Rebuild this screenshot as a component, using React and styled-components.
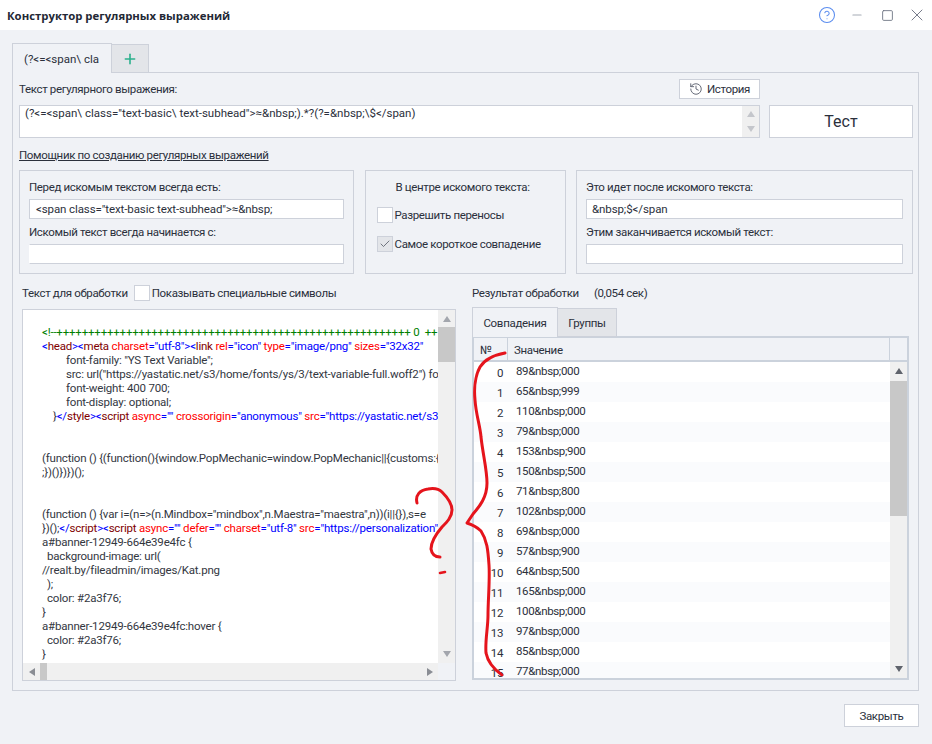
import React from "react";
import styled, { createGlobalStyle } from "styled-components";
import { CircleHelp, Minus, Square, X, Plus, History, Check } from "lucide-react";

const GlobalStyle = createGlobalStyle`
  html, body {
    margin: 0;
    padding: 0;
    background: #f0f2f6;
  }
  body {
    font-family: Roboto, "Liberation Sans", sans-serif;
    font-size: 11.5px;
    letter-spacing: -0.35px;
    color: #2b303c;
  }
  * {
    box-sizing: border-box;
  }
`;

const Page = styled.div`
  position: relative;
  width: 932px;
  height: 744px;
  overflow: hidden;
`;

const TitleBar = styled.div`
  height: 30px;
  background: #fff;
  display: flex;
  align-items: center;
  padding-left: 7px;
`;

const Title = styled.div`
  flex: 1;
  font-family: "Open Sans", sans-serif;
  font-weight: 700;
  font-size: 11.35px;
  letter-spacing: 0;
  color: #232835;
`;

const WindowButton = styled.div`
  width: 30px;
  height: 30px;
  display: flex;
  align-items: center;
  justify-content: center;
  color: ${(p) => p.$color || "#6a7080"};
`;

const Body = styled.div`
  padding: 13px 13px 0 12px;
`;

const TabRow = styled.div`
  display: flex;
  align-items: flex-end;
  position: relative;
  z-index: 1;
  margin-bottom: -1px;
`;

const Tab = styled.div`
  height: ${(p) => (p.$active ? 30 : 29)}px;
  width: ${(p) => p.$width}px;
  display: flex;
  align-items: center;
  justify-content: ${(p) => (p.$center ? "center" : "flex-start")};
  padding-left: ${(p) => (p.$center ? 0 : p.$pad || 0)}px;
  border: 1px solid #cdd1da;
  border-bottom: ${(p) => (p.$active ? "none" : "1px solid #cdd1da")};
  margin-left: ${(p) => (p.$active ? 0 : -1)}px;
  background: ${(p) => (p.$active ? "#f0f2f6" : "#e3e5e9")};
  color: #2b303c;
  letter-spacing: ${(p) => (p.$center ? "-0.3px" : "0")};
`;

const Panel = styled.div`
  height: 619px;
  border: 1px solid #cdd1da;
  padding: 6px 5px 0 6px;
`;

const TopGrid = styled.div`
  display: grid;
  grid-template-columns: 741px 144px;
  grid-template-rows: 20px 33px;
  column-gap: 9px;
  row-gap: 6px;
  align-items: center;
`;

const LabelRow = styled.div`
  display: flex;
  justify-content: space-between;
  align-items: center;
  grid-column: 1;
`;

const HistoryButton = styled.div`
  width: 81px;
  height: 20px;
  background: #fff;
  border: 1px solid #cdd1da;
  display: flex;
  align-items: center;
  justify-content: center;
  gap: 4px;
  color: #2b303c;
`;

const RegexBox = styled.div`
  grid-column: 1;
  height: 33px;
  background: #fff;
  border: 1px solid #cdd1da;
  display: flex;
  justify-content: space-between;
`;

const RegexText = styled.div`
  padding: 0 0 0 5px;
  line-height: 15px;
  letter-spacing: 0;
`;

const RegexScroll = styled.div`
  width: 17px;
  background: #f0f0f0;
  display: flex;
  flex-direction: column;
  align-items: center;
  justify-content: space-around;
`;

const Arrow = styled.span`
  width: 0;
  height: 0;
  display: block;
  border-style: solid;
  ${(p) => {
    const c = p.$color || "#6b6f78";
    if (p.$dir === "up") return `border-width: 0 4px 6px 4px; border-color: transparent transparent ${c} transparent;`;
    if (p.$dir === "down") return `border-width: 6px 4px 0 4px; border-color: ${c} transparent transparent transparent;`;
    if (p.$dir === "left") return `border-width: 4px 6px 4px 0; border-color: transparent ${c} transparent transparent;`;
    return `border-width: 4px 0 4px 6px; border-color: transparent transparent transparent ${c};`;
  }}
`;

const TestButton = styled.div`
  height: 33px;
  background: #fff;
  border: 1px solid #cdd1da;
  display: flex;
  align-items: center;
  justify-content: center;
  font-size: 16px;
  letter-spacing: 0;
  color: #2b303c;
`;

const HelperLink = styled.a`
  display: block;
  margin-top: 10px;
  height: 15px;
  line-height: 15px;
  color: #2b303c;
  text-decoration: underline;
`;

const Groups = styled.div`
  display: grid;
  grid-template-columns: 335px 201px 337px;
  column-gap: 10.5px;
  margin-top: 7px;
`;

const Group = styled.div`
  height: 104px;
  border: 1px solid #cdd1da;
  padding: 9px 9px 0 9px;
`;

const GroupLabel = styled.div`
  height: 15px;
  line-height: 15px;
  margin-bottom: ${(p) => p.$gap || 4}px;
`;

const Field = styled.div`
  height: 20px;
  line-height: 18px;
  background: #fff;
  border: 1px solid #cdd1da;
  border-left-color: ${(p) => (p.$bare ? "#fff" : "#cdd1da")};
  padding-left: ${(p) => p.$pad}px;
  margin-bottom: 6px;
  overflow: hidden;
  letter-spacing: -0.1px;
`;

const CheckRow = styled.div`
  display: flex;
  align-items: center;
  gap: 2px;
  height: 16px;
  margin: ${(p) => p.$margin || 0};
`;

const Box = styled.div`
  width: 16px;
  height: 16px;
  background: ${(p) => (p.$checked ? "#e3e5e9" : "#fff")};
  border: 1px solid #cdd1da;
  display: flex;
  align-items: center;
  justify-content: center;
  color: #4b505c;
`;

const MiddleHead = styled.div`
  height: 15px;
  line-height: 15px;
  padding-left: 21px;
`;

const Columns = styled.div`
  display: grid;
  grid-template-columns: 434px 438px;
  column-gap: 16px;
  margin-top: 11px;
  padding-left: 3px;
`;

const Column = styled.div`
  min-width: 0;
`;

const SectionHead = styled.div`
  height: 16px;
  display: flex;
  align-items: center;
  gap: ${(p) => p.$gap || 6}px;
  margin-bottom: 8px;
`;

const CodeBox = styled.div`
  height: 372px;
  border: 1px solid #cdd1da;
  background: #f0f2f6;
  display: grid;
  grid-template-columns: 415px 17px;
  grid-template-rows: 353px 17px;
`;

const CodeArea = styled.div`
  background: #fff;
  overflow: hidden;
  padding: 15px 0 0 19px;
  letter-spacing: -0.2px;
`;

const CodeLine = styled.div`
  height: 14px;
  line-height: 14px;
  white-space: pre;
  padding-left: ${(p) => p.$indent || 0}px;
  color: #33373f;
`;

const Token = styled.span`
  color: ${(p) => p.$c};
`;

const VScroll = styled.div`
  background: #f0f0f0;
  display: flex;
  flex-direction: column;
  align-items: center;
  justify-content: space-between;
  padding: ${(p) => p.$pad || "6px 0"};
  position: relative;
`;

const VThumb = styled.div`
  position: absolute;
  left: 0;
  right: 0;
  top: ${(p) => p.$top}px;
  height: ${(p) => p.$height}px;
  background: #c8c8c8;
`;

const HScroll = styled.div`
  background: #f0f0f0;
  display: flex;
  align-items: center;
  justify-content: space-between;
  padding: 0 5px 0 6px;
  position: relative;
`;

const HThumb = styled.div`
  position: absolute;
  left: 17px;
  top: 0;
  bottom: 0;
  width: 7px;
  background: #c8c8c8;
`;

const ResultTabs = styled.div`
  display: flex;
  align-items: flex-end;
  height: 28px;
  margin-bottom: -1px;
  position: relative;
  z-index: 1;
`;

const Table = styled.div`
  height: 344px;
  width: 437px;
  border: 2px solid #cbd2dc;
  display: grid;
  grid-template-columns: 1fr 17px;
  grid-template-rows: 24px 1fr;
`;

const HeadRow = styled.div`
  display: grid;
  grid-template-columns: 34px 1fr;
  border-bottom: 2px solid #cbd2dc;
`;

const HeadCell = styled.div`
  display: flex;
  align-items: center;
  padding: 2px 0 0 6px;
  border-right: 1px solid #cbd2dc;
`;

const HeadCorner = styled.div`
  border-bottom: 2px solid #cbd2dc;
`;

const Rows = styled.div`
  overflow: hidden;
  background: #fff;
`;

const Row = styled.div`
  height: 20px;
  display: grid;
  grid-template-columns: 29px 1fr;
  column-gap: 13px;
  background: ${(p) => (p.$alt ? "#fafbfd" : "#fff")};
`;

const NumCell = styled.div`
  text-align: right;
  line-height: 22px;
`;

const ValueCell = styled.div`
  line-height: 18px;
`;

const Footer = styled.div`
  display: flex;
  justify-content: flex-end;
  margin-top: 13px;
`;

const CloseButton = styled.div`
  width: 75px;
  height: 23px;
  background: #fff;
  border: 1px solid #cdd1da;
  display: flex;
  align-items: center;
  justify-content: center;
`;

const Scribble = styled.svg`
  position: absolute;
  left: 0;
  top: 0;
  pointer-events: none;
`;

const RED = "#e5141c";
const BLUE = "#0000ff";
const MAROON = "#800000";
const ATTR = "#ff0000";
const GREEN = "#008000";

const T = ({ c, children }) => <Token $c={c}>{children}</Token>;

const attr = (name, value) => (
  <>
    {" "}
    <T c={ATTR}>{name}</T>
    <T c={BLUE}>="{value}"</T>
  </>
);

const matches = [
  "89&nbsp;000",
  "65&nbsp;999",
  "110&nbsp;000",
  "79&nbsp;000",
  "153&nbsp;900",
  "150&nbsp;500",
  "71&nbsp;800",
  "102&nbsp;000",
  "69&nbsp;000",
  "57&nbsp;900",
  "64&nbsp;500",
  "165&nbsp;000",
  "100&nbsp;000",
  "97&nbsp;000",
  "85&nbsp;000",
  "77&nbsp;000",
];

const App = () => {
  return (
    <Page>
      <GlobalStyle />
      <TitleBar>
        <Title>Конструктор регулярных выражений</Title>
        <WindowButton $color="#5b8def">
          <CircleHelp size={18} strokeWidth={1.4} />
        </WindowButton>
        <WindowButton $color="#a6abb6">
          <Minus size={14} strokeWidth={2} />
        </WindowButton>
        <WindowButton>
          <Square size={13} strokeWidth={1.6} />
        </WindowButton>
        <WindowButton>
          <X size={20} strokeWidth={1.1} />
        </WindowButton>
      </TitleBar>

      <Body>
        <TabRow>
          <Tab $active $width={100} $pad={11}>
            {"(?<=<span\\ cla"}
          </Tab>
          <Tab $width={38} $center>
            <Plus size={16} strokeWidth={2.4} color="#2bb08c" />
          </Tab>
        </TabRow>

        <Panel>
          <TopGrid>
            <LabelRow>
              Текст регулярного выражения:
              <HistoryButton>
                <History size={14} strokeWidth={1.6} color="#5c6270" />
                История
              </HistoryButton>
            </LabelRow>
            <div />
            <RegexBox>
              <RegexText>
                {'(?<=<span\\ class="text-basic\\ text-subhead">≈&nbsp;).*?(?=&nbsp;\\$</span)'}
              </RegexText>
              <RegexScroll>
                <Arrow $dir="up" $color="#c4c6cb" />
                <Arrow $dir="down" $color="#c4c6cb" />
              </RegexScroll>
            </RegexBox>
            <TestButton>Тест</TestButton>
          </TopGrid>

          <HelperLink>Помощник по созданию регулярных выражений</HelperLink>

          <Groups>
            <Group>
              <GroupLabel>Перед искомым текстом всегда есть:</GroupLabel>
              <Field $pad={6}>{'<span class="text-basic text-subhead">≈&nbsp;'}</Field>
              <GroupLabel>Искомый текст всегда начинается с:</GroupLabel>
              <Field $pad={0} $bare />
            </Group>
            <Group>
              <MiddleHead>В центре искомого текста:</MiddleHead>
              <CheckRow $margin="12px 0 0 2px">
                <Box />
                Разрешить переносы
              </CheckRow>
              <CheckRow $margin="13px 0 0 2px">
                <Box $checked>
                  <Check size={12} strokeWidth={1.5} />
                </Box>
                Самое короткое совпадение
              </CheckRow>
            </Group>
            <Group>
              <GroupLabel>Это идет после искомого текста:</GroupLabel>
              <Field $pad={5}>{"&nbsp;$</span"}</Field>
              <GroupLabel>Этим заканчивается искомый текст:</GroupLabel>
              <Field $pad={0} />
            </Group>
          </Groups>

          <Columns>
            <Column>
              <SectionHead>
                Текст для обработки
                <CheckRow>
                  <Box />
                  Показывать специальные символы
                </CheckRow>
              </SectionHead>
              <CodeBox>
                <CodeArea>
                  <CodeLine>
                    <T c={GREEN}>{"<!--" + "+".repeat(56) + " 0  ++"}</T>
                  </CodeLine>
                  <CodeLine>
                    <T c={BLUE}>{"<"}</T>
                    <T c={MAROON}>head</T>
                    <T c={BLUE}>{"><"}</T>
                    <T c={MAROON}>meta</T>
                    {attr("charset", "utf-8")}
                    <T c={BLUE}>{"><"}</T>
                    <T c={MAROON}>link</T>
                    {attr("rel", "icon")}
                    {attr("type", "image/png")}
                    {attr("sizes", "32x32")}
                  </CodeLine>
                  <CodeLine $indent={24}>font-family: "YS Text Variable";</CodeLine>
                  <CodeLine $indent={24}>
                    src: url("https://yastatic.net/s3/home/fonts/ys/3/text-variable-full.woff2") format("woff2");
                  </CodeLine>
                  <CodeLine $indent={24}>font-weight: 400 700;</CodeLine>
                  <CodeLine $indent={24}>font-display: optional;</CodeLine>
                  <CodeLine $indent={11}>
                    {"}"}
                    <T c={BLUE}>{"</"}</T>
                    <T c={MAROON}>style</T>
                    <T c={BLUE}>{"><"}</T>
                    <T c={MAROON}>script</T>
                    {attr("async", "")}
                    {attr("crossorigin", "anonymous")}
                    {attr("src", "https://yastatic.net/s3/")}
                  </CodeLine>
                  <CodeLine />
                  <CodeLine />
                  <CodeLine>
                    {"(function () {(function(){window.PopMechanic=window.PopMechanic||{customs:{}"}
                  </CodeLine>
                  <CodeLine>{";})()})})();"}</CodeLine>
                  <CodeLine />
                  <CodeLine />
                  <CodeLine>
                    {'(function () {var i=(n=>(n.Mindbox="mindbox",n.Maestra="maestra",n))(i||{}),s=e'}
                  </CodeLine>
                  <CodeLine>
                    {"})();"}
                    <T c={BLUE}>{"</"}</T>
                    <T c={MAROON}>script</T>
                    <T c={BLUE}>{"><"}</T>
                    <T c={MAROON}>script</T>
                    {attr("async", "")}
                    {attr("defer", "")}
                    {attr("charset", "utf-8")}
                    {attr("src", "https://personalization")}
                  </CodeLine>
                  <CodeLine>{"a#banner-12949-664e39e4fc {"}</CodeLine>
                  <CodeLine $indent={5}>background-image: url(</CodeLine>
                  <CodeLine>//realt.by/fileadmin/images/Kat.png</CodeLine>
                  <CodeLine $indent={5}>);</CodeLine>
                  <CodeLine $indent={5}>color: #2a3f76;</CodeLine>
                  <CodeLine>{"}"}</CodeLine>
                  <CodeLine>{"a#banner-12949-664e39e4fc:hover {"}</CodeLine>
                  <CodeLine $indent={5}>color: #2a3f76;</CodeLine>
                  <CodeLine>{"}"}</CodeLine>
                </CodeArea>
                <VScroll>
                  <Arrow $dir="up" $color="#a3a6ad" />
                  <VThumb $top={17} $height={35} />
                  <Arrow $dir="down" $color="#a3a6ad" />
                </VScroll>
                <HScroll>
                  <Arrow $dir="left" $color="#8a8d94" />
                  <HThumb />
                  <Arrow $dir="right" $color="#8a8d94" />
                </HScroll>
              </CodeBox>
            </Column>

            <Column>
              <SectionHead $gap={15}>
                <span>Результат обработки</span>
                <span>(0,054 сек)</span>
              </SectionHead>
              <ResultTabs>
                <Tab $active $width={86} $center>
                  Совпадения
                </Tab>
                <Tab $width={60} $center>
                  Группы
                </Tab>
              </ResultTabs>
              <Table>
                <HeadRow>
                  <HeadCell>№</HeadCell>
                  <HeadCell>Значение</HeadCell>
                </HeadRow>
                <HeadCorner />
                <Rows>
                  {matches.map((value, i) => (
                    <Row key={i} $alt={i % 2 === 1}>
                      <NumCell>{i}</NumCell>
                      <ValueCell>{value}</ValueCell>
                    </Row>
                  ))}
                </Rows>
                <VScroll>
                  <Arrow $dir="up" $color="#5f636c" />
                  <VThumb $top={19} $height={135} />
                  <Arrow $dir="down" $color="#5f636c" />
                </VScroll>
              </Table>
            </Column>
          </Columns>
        </Panel>

        <Footer>
          <CloseButton>Закрыть</CloseButton>
        </Footer>
      </Body>

      <Scribble width="932" height="744" viewBox="0 0 932 744" fill="none">
        <path
          d="M505 353 C494 355 485 359 480 367 C475 376 474 390 475 400 C476 415 480 425 481 437 C483 455 487 470 487 483 C487 497 480 506 473 514 L467 523 C473 525 477 527 481 531 C487 540 488 550 489 565 C490 580 488 600 488 615 C488 628 485 640 486 653 C488 663 495 670 502 675"
          stroke={RED}
          strokeWidth="3"
          strokeLinecap="round"
          strokeLinejoin="round"
        />
        <path
          d="M417 503 C415 495 420 490 428 489 C434 488 439 489 442 492 C447 497 452 503 452 510 C452 517 447 522 442 527 C436 534 431 541 431 549 C432 555 435 557 440 557"
          stroke={RED}
          strokeWidth="3"
          strokeLinecap="round"
        />
        <path d="M440 573 L445 572" stroke={RED} strokeWidth="2.6" strokeLinecap="round" />
      </Scribble>
    </Page>
  );
};

export default App;
